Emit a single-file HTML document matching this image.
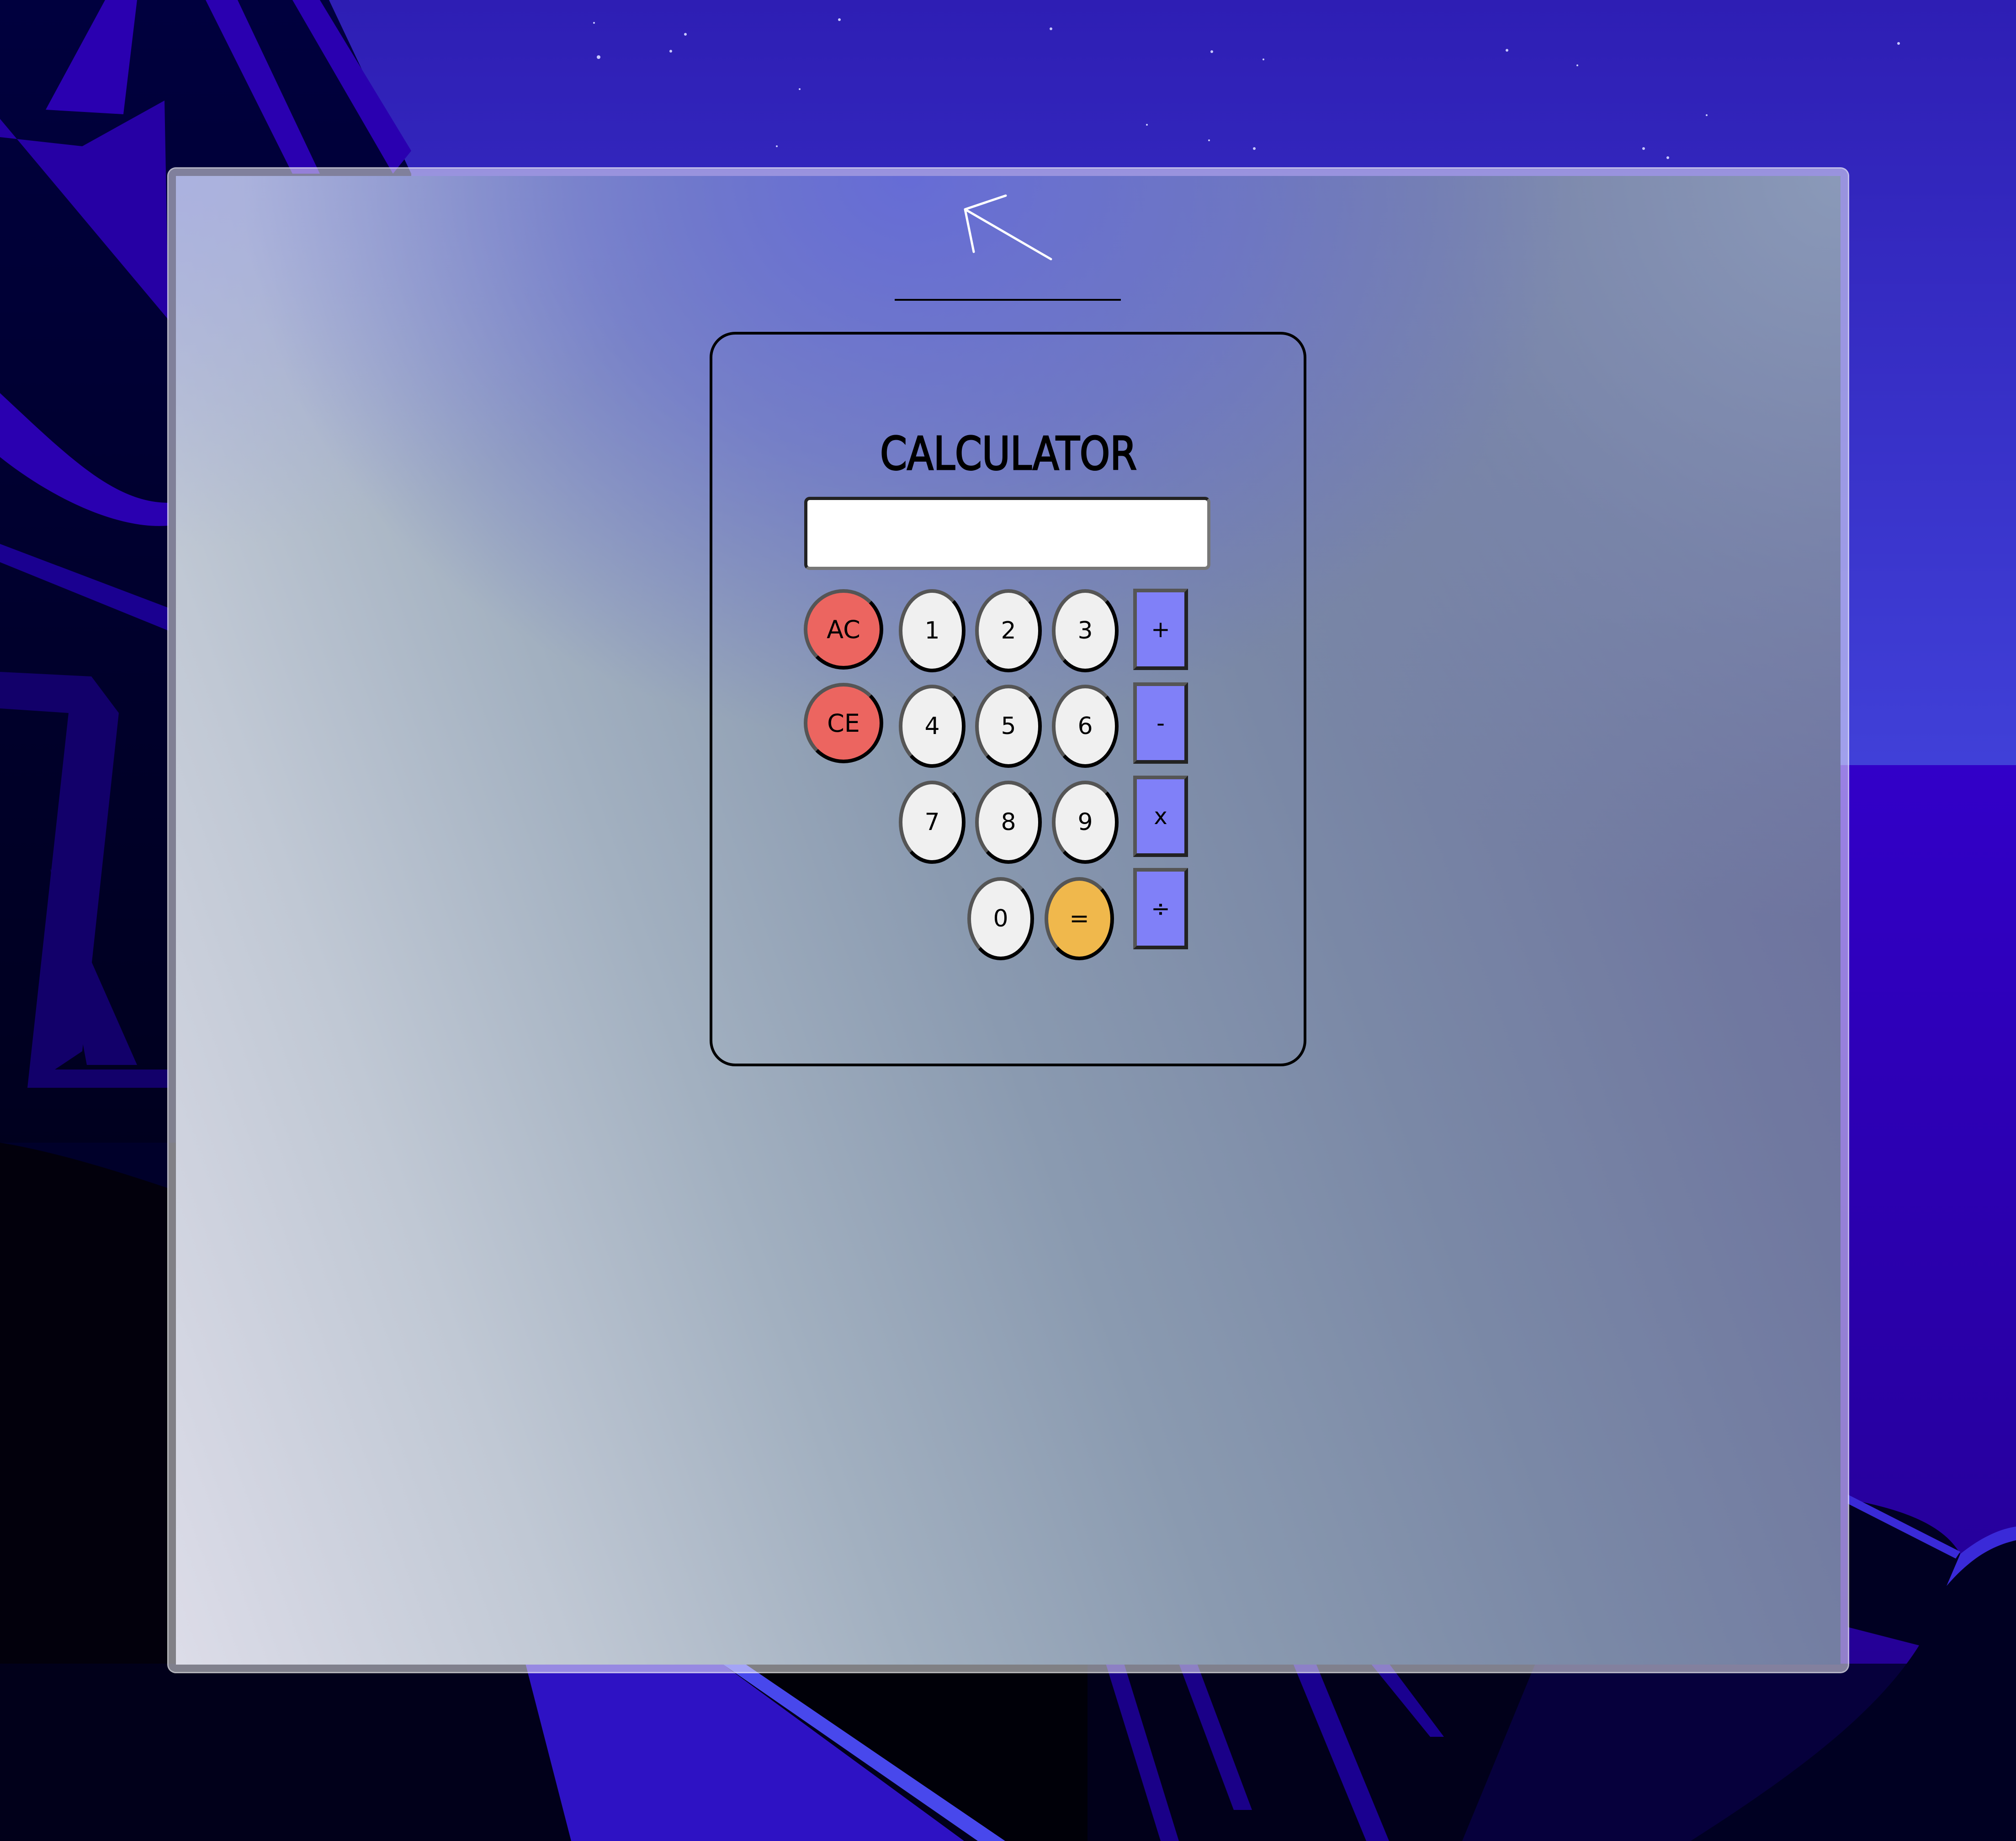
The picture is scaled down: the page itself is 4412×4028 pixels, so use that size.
<!DOCTYPE html>
<html><head><meta charset="utf-8">
<style>
html,body{margin:0;padding:0;width:4412px;height:4028px;overflow:hidden;background:#2f20b6;}
#bg{position:absolute;left:0;top:0;}
.panel{position:absolute;left:369px;top:369px;width:3675px;height:3289px;box-sizing:border-box;
 border-radius:16px;border:16px solid rgba(255,255,255,0.5);box-shadow:0 0 0 3px rgba(255,255,255,0.7);overflow:hidden;}
.panel-in{position:absolute;left:0;top:0;right:0;bottom:0;
 background:
 radial-gradient(ellipse 40% 38% at 44% 0%, rgba(102,108,214,1) 0%, rgba(102,108,214,0.6) 50%, rgba(102,108,214,0) 100%),
 radial-gradient(ellipse 30% 25% at 0% 0%, rgba(170,176,226,0.9), rgba(170,176,226,0) 100%),
 radial-gradient(ellipse 45% 50% at 100% 0%, rgba(140,156,186,0.95) 0%, rgba(130,146,178,0.5) 55%, rgba(130,146,178,0) 100%),
 linear-gradient(70deg, #dcdce8 0%, #c0c8d4 18%, #a2b0c0 33%, #8a9ab0 48%, #7a88a6 65%, #7078a0 82%, #6a6a9c 100%);}
.abs{position:absolute;}
.calc{position:absolute;left:1553px;top:726px;width:1306px;height:1607px;box-sizing:border-box;border:6px solid #000;border-radius:56px;}
.disp{position:absolute;left:1760px;top:1087px;width:889px;height:160px;box-sizing:border-box;background:#fff;
 border:7px solid;border-color:#222 #777 #777 #222;border-radius:12px;}
.b{position:absolute;box-sizing:border-box;border:8px solid;border-color:#555 #000 #000 #555;border-radius:50%;
 font-family:"DejaVu Sans","Liberation Sans",sans-serif;font-size:52px;color:#000;display:flex;align-items:center;justify-content:center;}
.n{width:146px;height:182px;background:#f0f0f0;}
.r{width:174px;height:176px;background:#ec6560;font-size:54px;}
.o{width:120px;height:178px;border-radius:0;background:#8080f8;border-width:8px;border-color:#555 #222 #222 #555;font-size:50px;}
.e{background:#f0b84c;}
</style></head><body>
<svg id="bg" width="4412" height="4028" viewBox="0 0 4412 4028" xmlns="http://www.w3.org/2000/svg">
<defs>
<linearGradient id="sky" x1="0" y1="0" x2="0" y2="1"><stop offset="0" stop-color="#2e1eb4"/><stop offset="1" stop-color="#4040d8"/></linearGradient>
<linearGradient id="sea" x1="0" y1="0" x2="0" y2="1"><stop offset="0" stop-color="#3200c8"/><stop offset="1" stop-color="#22008c"/></linearGradient>
<linearGradient id="dk" x1="0" y1="0" x2="0" y2="1"><stop offset="0" stop-color="#00003e"/><stop offset="1" stop-color="#000010"/></linearGradient>
</defs>
<rect width="4412" height="1674" fill="url(#sky)"/>
<rect y="1674" width="4412" height="2354" fill="url(#sea)"/>
<!-- left cliffs -->
<polygon points="0,0 720,0 900,380 900,3640 0,3640" fill="url(#dk)"/>
<path d="M230,0 L300,0 L270,250 L100,240 Z" fill="#2a00b0"/>
<path d="M450,0 L520,0 L700,380 L640,380 Z" fill="#2a00b0"/>
<path d="M640,0 L700,0 L900,330 L860,380 Z" fill="#2a00b0"/>
<path d="M0,300 L180,320 L360,220 L369,700 L0,260 Z" fill="#2a00b0" opacity="0.9"/>
<path d="M0,860 C150,1000 250,1100 369,1100 L369,1150 C250,1160 100,1080 0,1000 Z" fill="#2a00b0"/>
<path d="M0,1190 L369,1330 L369,1380 L0,1230 Z" fill="#1a0090"/>
<path d="M0,1470 L200,1480 L260,1560 L180,2300 L120,2340 L369,2340 L369,2380 L60,2380 L150,1560 L0,1550 Z" fill="#12006a"/>
<path d="M110,1900 L300,2330 L190,2330 Z" fill="#12006a"/>
<path d="M0,2500 L900,2500 L900,4028 L0,4028 Z" fill="#02000c"/>
<path d="M0,2500 C120,2520 250,2560 369,2600 L369,2500 Z" fill="#00002a"/>
<!-- bottom -->
<rect x="0" y="3640" width="4412" height="388" fill="#01001a"/>
<polygon points="1150,3640 1580,3640 2110,4028 1250,4028" fill="#2e12c4"/>
<polygon points="1580,3640 1630,3640 2200,4028 2140,4028" fill="#4848ec"/>
<polygon points="1630,3640 2380,3640 2380,4028 2200,4028" fill="#000008"/>
<polygon points="2420,3640 2460,3640 2580,4028 2540,4028" fill="#1a0088"/>
<polygon points="2580,3640 2620,3640 2740,3960 2700,3960" fill="#1a0088"/>
<polygon points="2830,3640 2880,3640 3040,4028 2990,4028" fill="#1a0090"/>
<polygon points="3000,3640 3040,3640 3160,3800 3130,3800" fill="#1a0090"/>
<polygon points="3360,3640 4412,3640 4412,4028 3200,4028" fill="#06003c"/>
<!-- right hill -->
<path d="M4044,3280 C4150,3300 4250,3330 4290,3400 C4330,3380 4380,3350 4412,3340 L4412,4028 L3700,4028 C3900,3900 4100,3760 4200,3600 L4044,3560 Z" fill="#000022"/>
<path d="M4044,3270 L4290,3395 L4280,3410 L4044,3290 Z" fill="#3a2ad8"/>
<path d="M4290,3400 C4340,3360 4380,3345 4412,3340 L4412,3370 C4370,3380 4320,3400 4260,3470 Z" fill="#3a2ad8"/>
<!-- stars -->
<g fill="#c8c8ff">
<circle cx="1310" cy="125" r="4"/><circle cx="1468" cy="112" r="3"/><circle cx="1500" cy="75" r="3"/><circle cx="1837" cy="43" r="3"/><circle cx="1300" cy="50" r="2"/><circle cx="2300" cy="63" r="3"/><circle cx="2652" cy="113" r="3"/><circle cx="3298" cy="110" r="3"/><circle cx="3452" cy="143" r="2"/><circle cx="4155" cy="95" r="3"/><circle cx="2765" cy="130" r="2"/><circle cx="1750" cy="195" r="2"/><circle cx="1700" cy="320" r="2"/><circle cx="2510" cy="273" r="2"/><circle cx="2646" cy="307" r="2"/><circle cx="2745" cy="325" r="3"/><circle cx="3597" cy="325" r="3"/><circle cx="3650" cy="345" r="3"/><circle cx="3735" cy="252" r="2"/>
</g>
</svg>
<div class="panel"><div class="panel-in"></div></div>
<svg class="abs" style="left:0;top:0" width="4412" height="4028" xmlns="http://www.w3.org/2000/svg">
<path d="M2201,428 L2112,458 L2131,551 M2112,458 L2300,567" stroke="#fff" stroke-width="5" fill="none" stroke-linecap="round" stroke-linejoin="round"/>
<line x1="1958" y1="656" x2="2453" y2="656" stroke="#000" stroke-width="4"/>
<text x="2207" y="1027" text-anchor="middle" textLength="562" lengthAdjust="spacingAndGlyphs" font-family="DejaVu Sans, Liberation Sans, sans-serif" font-size="100" fill="#000" stroke="#000" stroke-width="3">CALCULATOR</text>
</svg>
<div class="calc"></div>
<div class="disp"></div>
<div class="b r" style="left:1759px;top:1289px">AC</div>
<div class="b r" style="left:1759px;top:1494px">CE</div>
<div class="b n" style="left:1967px;top:1289px">1</div>
<div class="b n" style="left:2134px;top:1289px">2</div>
<div class="b n" style="left:2302px;top:1289px">3</div>
<div class="b n" style="left:1967px;top:1498px">4</div>
<div class="b n" style="left:2134px;top:1498px">5</div>
<div class="b n" style="left:2302px;top:1498px">6</div>
<div class="b n" style="left:1967px;top:1708px">7</div>
<div class="b n" style="left:2134px;top:1708px">8</div>
<div class="b n" style="left:2302px;top:1708px">9</div>
<div class="b n" style="left:2117px;top:1919px">0</div>
<div class="b n e" style="left:2286px;top:1919px;width:152px">=</div>
<div class="b o" style="left:2480px;top:1288px">+</div>
<div class="b o" style="left:2480px;top:1493px">-</div>
<div class="b o" style="left:2480px;top:1697px">x</div>
<div class="b o" style="left:2480px;top:1899px">÷</div>
</body></html>
